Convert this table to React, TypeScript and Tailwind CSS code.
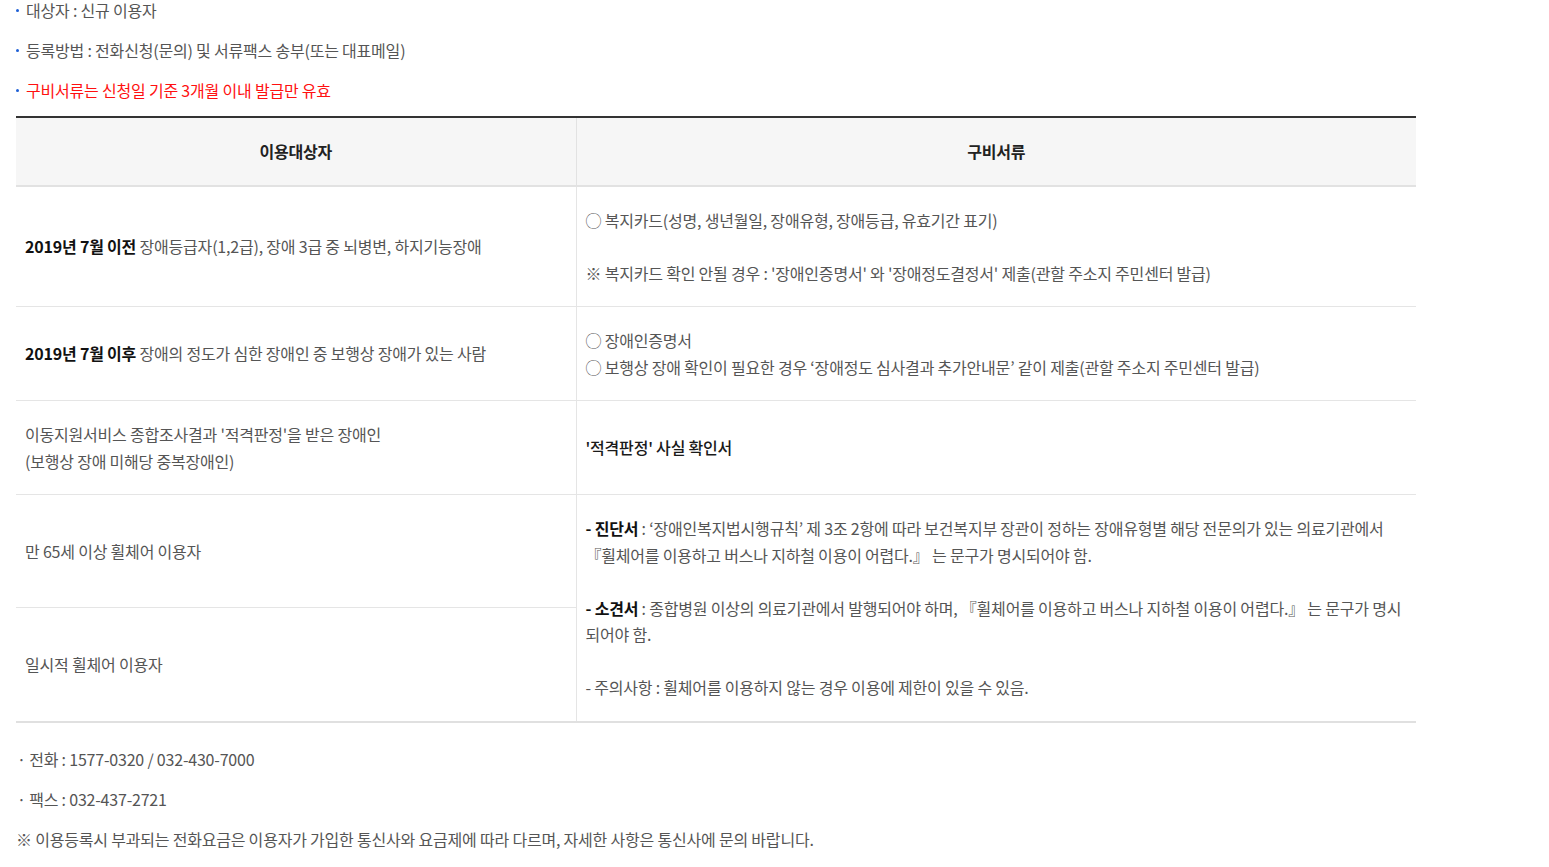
import React from "react";

const font = "font-['Noto_Sans_CJK_KR','Noto_Sans',sans-serif] tracking-[-0.2px]";

function Dot() {
  return <span className="mr-[7px] inline-block h-[3px] w-[3px] shrink-0 rounded-full bg-[#1d5fd6]" />;
}

export default function App() {
  const td = "border-b border-[#e5e5e5] px-[9px] py-5 align-middle";
  return (
    <div className={`min-h-screen bg-white pl-4 text-[16px] leading-[26.5px] text-[#555] ${font}`}>
      <ul className="flex flex-col gap-5">
        <li className="flex items-center leading-[20px]">
          <Dot />
          대상자 : 신규 이용자
        </li>
        <li className="flex items-center leading-[20px]">
          <Dot />
          등록방법 : 전화신청(문의) 및 서류팩스 송부(또는 대표메일)
        </li>
        <li className="flex items-center leading-[20px] text-[#ff1010]">
          <Dot />
          구비서류는 신청일 기준 3개월 이내 발급만 유효
        </li>
      </ul>

      <table className="mt-4 w-[1400px] border-collapse border-t-2 border-b-2 border-t-[#333] border-b-[#e0e0e0]">
        <colgroup>
          <col className="w-[560px]" />
          <col />
        </colgroup>
        <thead>
          <tr className="bg-[#f6f6f6]">
            <th className="border-b-2 border-[#e2e2e2] py-5 text-center font-bold text-[#222]">이용대상자</th>
            <th className="border-b-2 border-l border-[#e2e2e2] py-5 text-center font-bold text-[#222]">구비서류</th>
          </tr>
        </thead>
        <tbody>
          <tr>
            <td className={td}>
              <b className="text-[#111]">2019년 7월 이전</b> 장애등급자(1,2급), 장애 3급 중 뇌병변, 하지기능장애
            </td>
            <td className={`${td} border-l`}>
              <p>◯ 복지카드(성명, 생년월일, 장애유형, 장애등급, 유효기간 표기)</p>
              <p>&nbsp;</p>
              <p>※ 복지카드 확인 안될 경우 : '장애인증명서' 와 '장애정도결정서' 제출(관할 주소지 주민센터 발급)</p>
            </td>
          </tr>
          <tr>
            <td className={td}>
              <b className="text-[#111]">2019년 7월 이후</b> 장애의 정도가 심한 장애인 중 보행상 장애가 있는 사람
            </td>
            <td className={`${td} border-l`}>
              <p>◯ 장애인증명서</p>
              <p>◯ 보행상 장애 확인이 필요한 경우 ‘장애정도 심사결과 추가안내문’ 같이 제출(관할 주소지 주민센터 발급)</p>
            </td>
          </tr>
          <tr>
            <td className={td}>
              <p>이동지원서비스 종합조사결과 '적격판정'을 받은 장애인</p>
              <p>(보행상 장애 미해당 중복장애인)</p>
            </td>
            <td className={`${td} border-l font-medium text-[#1a1a1a]`}>'적격판정' 사실 확인서</td>
          </tr>
          <tr>
            <td className={td}>만 65세 이상 휠체어 이용자</td>
            <td rowSpan={2} className={`${td} border-l`}>
              <p className="whitespace-nowrap">
                <b className="text-[#111]">- 진단서</b> : ‘장애인복지법시행규칙’ 제 3조 2항에 따라 보건복지부 장관이 정하는 장애유형별 해당 전문의가 있는 의료기관에서
                <br />
                『휠체어를 이용하고 버스나 지하철 이용이 어렵다.』 는 문구가 명시되어야 함.
              </p>
              <p>&nbsp;</p>
              <p className="whitespace-nowrap">
                <b className="text-[#111]">- 소견서</b> : 종합병원 이상의 의료기관에서 발행되어야 하며, 『휠체어를 이용하고 버스나 지하철 이용이 어렵다.』 는 문구가 명시
                <br />
                되어야 함.
              </p>
              <p>&nbsp;</p>
              <p>- 주의사항 : 휠체어를 이용하지 않는 경우 이용에 제한이 있을 수 있음.</p>
            </td>
          </tr>
          <tr>
            <td className={td}>일시적 휠체어 이용자</td>
          </tr>
        </tbody>
      </table>

      <div className="mt-[26px] flex flex-col gap-5 leading-[20px]">
        <p className="pl-[1px]">· 전화 : 1577-0320 / 032-430-7000</p>
        <p className="pl-[1px]">· 팩스 : 032-437-2721</p>
        <p>※ 이용등록시 부과되는 전화요금은 이용자가 가입한 통신사와 요금제에 따라 다르며, 자세한 사항은 통신사에 문의 바랍니다.</p>
      </div>
    </div>
  );
}
